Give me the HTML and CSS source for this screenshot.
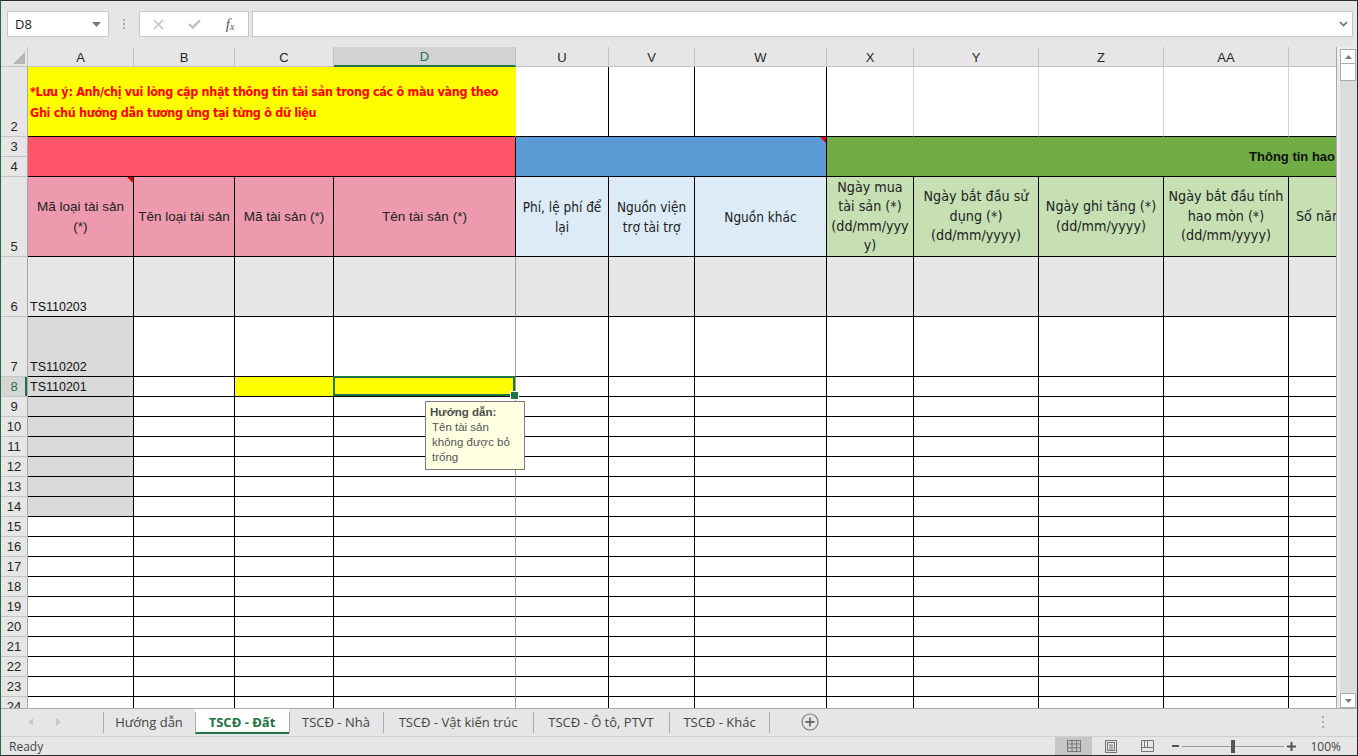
FILE: index.html
```html
<!DOCTYPE html>
<html lang="vi">
<head>
<meta charset="utf-8">
<title>TSCĐ - Đất</title>
<link rel="stylesheet" href="styles.css">
</head>
<body>
<div class="app">
  <div class="fbar">
    <div class="namebox">
      <span class="nb-text">D8</span>
      <svg class="nb-arrow" width="9" height="5" viewBox="0 0 9 5"><polygon points="0,0 9,0 4.5,5" fill="#7a7a7a"/></svg>
    </div>
    <div class="fb-dots"><i></i><i></i><i></i></div>
    <div class="fb-btns">
      <span class="fb-slot"><svg width="11" height="11" viewBox="0 0 11 11"><path d="M1 1L10 10M10 1L1 10" stroke="#bdbdbd" stroke-width="1.4" fill="none"/></svg></span>
      <span class="fb-slot"><svg width="13" height="10" viewBox="0 0 13 10"><path d="M1 5L4.8 8.6L12 1.2" stroke="#bdbdbd" stroke-width="2.2" fill="none"/></svg></span>
      <span class="fb-slot fx">f<small>x</small></span>
    </div>
    <div class="fb-input">
      <svg class="fb-chev" width="9" height="6" viewBox="0 0 9 6"><path d="M1 1L4.5 4.5L8 1" stroke="#6f6f6f" stroke-width="1.6" fill="none"/></svg>
    </div>
  </div>

  <div class="main">
    <div class="sheet">
      <div class="row hdr">
        <div class="corner"><svg width="12" height="12" viewBox="0 0 12 12"><polygon points="12,0 12,12 0,12" fill="#b5b5b5"/></svg></div>
        <div class="ch">A</div><div class="ch">B</div><div class="ch">C</div><div class="ch csel">D</div>
        <div class="ch">U</div><div class="ch">V</div><div class="ch">W</div><div class="ch">X</div>
        <div class="ch">Y</div><div class="ch">Z</div><div class="ch">AA</div><div class="ch chl"></div>
      </div>

      <div class="row h70">
        <div class="rh">2</div>
        <div class="c note s4">*Lưu ý: Anh/chị vui lòng cập nhật thông tin tài sản trong các ô màu vàng theo<br>Ghi chú hướng dẫn tương ứng tại từng ô dữ liệu</div>
        <div class="c"></div><div class="c"></div><div class="c"></div>
        <div class="c gl"></div><div class="c gl"></div><div class="c gl"></div><div class="c gl"></div><div class="c e"></div>
      </div>

      <div class="row h40">
        <div class="rh-pair"><div class="rh">3</div><div class="rh">4</div></div>
        <div class="c band-red s4"></div>
        <div class="c band-blue s3 cmt"></div>
        <div class="c band-green s5 e"><span class="band-title">Thông tin hao</span></div>
      </div>

      <div class="row h80">
        <div class="rh">5</div>
        <div class="c hd pk cmt">Mã loại tài sản<br>(*)</div>
        <div class="c hd pk">Tên loại tài sản</div>
        <div class="c hd pk">Mã tài sản (*)</div>
        <div class="c hd pk">Tên tài sản (*)</div>
        <div class="c hd lb nw">Phí, lệ phí để<br>lại</div>
        <div class="c hd lb nw">Nguồn viện<br>trợ tài trợ</div>
        <div class="c hd lb nw">Nguồn khác</div>
        <div class="c hd lg nl">Ngày mua<br>tài sản (*)<br>(dd/mm/yyy<br>y)</div>
        <div class="c hd lg nl">Ngày bắt đầu sử<br>dụng (*)<br>(dd/mm/yyyy)</div>
        <div class="c hd lg nl">Ngày ghi tăng (*)<br>(dd/mm/yyyy)</div>
        <div class="c hd lg nl">Ngày bắt đầu tính<br>hao mòn (*)<br>(dd/mm/yyyy)</div>
        <div class="c hd lg nl e clip">Số năm sử dụng</div>
      </div>

      <div class="row h60">
        <div class="rh">6</div>
        <div class="c g6 v">TS110203</div><div class="c g6"></div><div class="c g6"></div><div class="c g6 dz"></div>
        <div class="c g6"></div><div class="c g6"></div><div class="c g6"></div><div class="c g6"></div>
        <div class="c g6"></div><div class="c g6"></div><div class="c g6"></div><div class="c g6 e"></div>
      </div>

      <div class="row h60">
        <div class="rh">7</div>
        <div class="c ga v">TS110202</div><div class="c"></div><div class="c"></div><div class="c dz"></div>
        <div class="c"></div><div class="c"></div><div class="c"></div><div class="c"></div>
        <div class="c"></div><div class="c"></div><div class="c"></div><div class="c e"></div>
      </div>

      <div class="row h20">
        <div class="rh rsel">8</div>
        <div class="c ga v">TS110201</div><div class="c"></div><div class="c yl"></div><div class="c yl dz sel"></div>
        <div class="c"></div><div class="c"></div><div class="c"></div><div class="c"></div>
        <div class="c"></div><div class="c"></div><div class="c"></div><div class="c e"></div>
      </div>

      <div class="row h20"><div class="rh">9</div><div class="c ga"></div><div class="c"></div><div class="c"></div><div class="c dz"></div><div class="c"></div><div class="c"></div><div class="c"></div><div class="c"></div><div class="c"></div><div class="c"></div><div class="c"></div><div class="c e"></div></div>
      <div class="row h20"><div class="rh">10</div><div class="c ga"></div><div class="c"></div><div class="c"></div><div class="c dz"></div><div class="c"></div><div class="c"></div><div class="c"></div><div class="c"></div><div class="c"></div><div class="c"></div><div class="c"></div><div class="c e"></div></div>
      <div class="row h20"><div class="rh">11</div><div class="c ga"></div><div class="c"></div><div class="c"></div><div class="c dz"></div><div class="c"></div><div class="c"></div><div class="c"></div><div class="c"></div><div class="c"></div><div class="c"></div><div class="c"></div><div class="c e"></div></div>
      <div class="row h20"><div class="rh">12</div><div class="c ga"></div><div class="c"></div><div class="c"></div><div class="c dz"></div><div class="c"></div><div class="c"></div><div class="c"></div><div class="c"></div><div class="c"></div><div class="c"></div><div class="c"></div><div class="c e"></div></div>
      <div class="row h20"><div class="rh">13</div><div class="c ga"></div><div class="c"></div><div class="c"></div><div class="c dz"></div><div class="c"></div><div class="c"></div><div class="c"></div><div class="c"></div><div class="c"></div><div class="c"></div><div class="c"></div><div class="c e"></div></div>
      <div class="row h20"><div class="rh">14</div><div class="c ga"></div><div class="c"></div><div class="c"></div><div class="c dz"></div><div class="c"></div><div class="c"></div><div class="c"></div><div class="c"></div><div class="c"></div><div class="c"></div><div class="c"></div><div class="c e"></div></div>
      <div class="row h20"><div class="rh">15</div><div class="c"></div><div class="c"></div><div class="c"></div><div class="c dz"></div><div class="c"></div><div class="c"></div><div class="c"></div><div class="c"></div><div class="c"></div><div class="c"></div><div class="c"></div><div class="c e"></div></div>
      <div class="row h20"><div class="rh">16</div><div class="c"></div><div class="c"></div><div class="c"></div><div class="c dz"></div><div class="c"></div><div class="c"></div><div class="c"></div><div class="c"></div><div class="c"></div><div class="c"></div><div class="c"></div><div class="c e"></div></div>
      <div class="row h20"><div class="rh">17</div><div class="c"></div><div class="c"></div><div class="c"></div><div class="c dz"></div><div class="c"></div><div class="c"></div><div class="c"></div><div class="c"></div><div class="c"></div><div class="c"></div><div class="c"></div><div class="c e"></div></div>
      <div class="row h20"><div class="rh">18</div><div class="c"></div><div class="c"></div><div class="c"></div><div class="c dz"></div><div class="c"></div><div class="c"></div><div class="c"></div><div class="c"></div><div class="c"></div><div class="c"></div><div class="c"></div><div class="c e"></div></div>
      <div class="row h20"><div class="rh">19</div><div class="c"></div><div class="c"></div><div class="c"></div><div class="c dz"></div><div class="c"></div><div class="c"></div><div class="c"></div><div class="c"></div><div class="c"></div><div class="c"></div><div class="c"></div><div class="c e"></div></div>
      <div class="row h20"><div class="rh">20</div><div class="c"></div><div class="c"></div><div class="c"></div><div class="c dz"></div><div class="c"></div><div class="c"></div><div class="c"></div><div class="c"></div><div class="c"></div><div class="c"></div><div class="c"></div><div class="c e"></div></div>
      <div class="row h20"><div class="rh">21</div><div class="c"></div><div class="c"></div><div class="c"></div><div class="c dz"></div><div class="c"></div><div class="c"></div><div class="c"></div><div class="c"></div><div class="c"></div><div class="c"></div><div class="c"></div><div class="c e"></div></div>
      <div class="row h20"><div class="rh">22</div><div class="c"></div><div class="c"></div><div class="c"></div><div class="c dz"></div><div class="c"></div><div class="c"></div><div class="c"></div><div class="c"></div><div class="c"></div><div class="c"></div><div class="c"></div><div class="c e"></div></div>
      <div class="row h20"><div class="rh">23</div><div class="c"></div><div class="c"></div><div class="c"></div><div class="c dz"></div><div class="c"></div><div class="c"></div><div class="c"></div><div class="c"></div><div class="c"></div><div class="c"></div><div class="c"></div><div class="c e"></div></div>
      <div class="row h20"><div class="rh">24</div><div class="c"></div><div class="c"></div><div class="c"></div><div class="c dz"></div><div class="c"></div><div class="c"></div><div class="c"></div><div class="c"></div><div class="c"></div><div class="c"></div><div class="c"></div><div class="c e"></div></div>

      <div class="tooltip">
        <div class="tt-title">Hướng dẫn:</div>
        <div class="tt-body">Tên tài sản<br>không được bỏ<br>trống</div>
      </div>
    </div>

    <div class="vscroll">
      <div class="vtrack">
        <div class="vbtn"><svg width="7" height="4" viewBox="0 0 7 4"><polygon points="0,4 7,4 3.5,0" fill="#7a7a7a"/></svg></div>
        <div class="vthumb"></div>
        <div class="vfill"></div>
        <div class="vbtn"><svg width="7" height="4" viewBox="0 0 7 4"><polygon points="0,0 7,0 3.5,4" fill="#7a7a7a"/></svg></div>
      </div>
    </div>
  </div>

  <div class="tabbar">
    <div class="tabnav">
      <svg width="5" height="8" viewBox="0 0 5 8"><polygon points="5,0 5,8 0,4" fill="#c8c8c8"/></svg>
      <svg width="5" height="8" viewBox="0 0 5 8"><polygon points="0,0 0,8 5,4" fill="#c8c8c8"/></svg>
    </div>
    <div class="tab t92">Hướng dẫn</div>
    <div class="tab t94 active">TSCĐ - Đất</div>
    <div class="tab t94">TSCĐ - Nhà</div>
    <div class="tab t150">TSCĐ - Vật kiến trúc</div>
    <div class="tab t136">TSCĐ - Ô tô, PTVT</div>
    <div class="tab t101 tab-end">TSCĐ - Khác</div>
    <div class="addsheet"><svg width="18" height="18" viewBox="0 0 18 18"><circle cx="9" cy="9" r="8" fill="none" stroke="#7a7a7a" stroke-width="1.2"/><path d="M9 4.5V13.5M4.5 9H13.5" stroke="#6a6a6a" stroke-width="1.8"/></svg></div>
    <div class="hdots"><i></i><i></i><i></i></div>
  </div>

  <div class="status">
    <span class="ready">Ready</span>
    <div class="views">
      <div class="view on"><svg width="14" height="12" viewBox="0 0 14 12"><rect x="0.5" y="0.5" width="13" height="11" fill="none" stroke="#767676"/><path d="M5 0.5V11.5M9.5 0.5V11.5M0.5 4H13.5M0.5 7.8H13.5" stroke="#767676"/></svg></div>
      <div class="view"><svg width="12" height="13" viewBox="0 0 12 13"><rect x="0.5" y="0.5" width="11" height="12" fill="none" stroke="#767676"/><rect x="2.5" y="2.5" width="7" height="8" fill="none" stroke="#767676"/><path d="M4 5H8M4 7H8M4 9H8" stroke="#767676"/></svg></div>
      <div class="view"><svg width="13" height="12" viewBox="0 0 13 12"><path d="M0.5 0.5H12.5V11.5H0.5Z" fill="none" stroke="#767676"/><path d="M6.5 0.5V7.5H0.5M6.5 7.5H12.5" fill="none" stroke="#767676"/><path d="M3.5 0.5V7.5" stroke="#767676"/></svg></div>
    </div>
    <div class="zoom">
      <span class="zminus"></span>
      <span class="ztrack"><span class="zthumb"></span></span>
      <svg class="zplus" width="9" height="9" viewBox="0 0 9 9"><path d="M4.5 0V9M0 4.5H9" stroke="#555" stroke-width="2"/></svg>
      <span class="zpct">100%</span>
    </div>
  </div>
</div>
</body>
</html>
```

FILE: styles.css
```css
* { box-sizing: border-box; margin: 0; padding: 0; }
html, body { width: 1358px; height: 756px; overflow: hidden; background: #fff; }
body { font-family: "Liberation Sans", Arial, sans-serif; font-size: 13px; color: #222; }

.app {
  width: 1358px; height: 756px;
  border: 1px solid #2a2a2a; border-left-color: #1f6b42;
  display: flex; flex-direction: column;
  background: #e6e6e6;
}

/* formula bar */
.fbar { height: 46px; flex: none; display: flex; align-items: center; padding: 0 4px 0 6px; }
.namebox {
  width: 102px; height: 26px; background: #fff; border: 1px solid #c6c6c6;
  display: flex; align-items: center; justify-content: space-between; padding: 0 7px 0 7px;
  font-family: "Open Sans", "Noto Sans", sans-serif; font-size: 13px; color: #222;
}
.fb-dots { width: 30px; display: flex; flex-direction: column; align-items: center; gap: 2px; }
.fb-dots i, .hdots i { display: block; width: 2px; height: 2px; background: #a8a8a8; }
.fb-btns {
  width: 110px; height: 26px; background: #fff; border: 1px solid #c6c6c6;
  display: flex; align-items: center; padding-left: 1px;
}
.fb-slot { width: 36px; height: 24px; display: flex; align-items: center; justify-content: center; }
.fx { font-family: "Liberation Serif", serif; font-style: italic; font-size: 15px; color: #555; }
.fx small { font-size: 10px; position: relative; top: 2px; }
.fb-input {
  flex: 1; height: 26px; margin-left: 3px; background: #fff; border: 1px solid #c6c6c6;
  display: flex; align-items: center; justify-content: flex-end; padding-right: 4px;
}

/* main */
.main { height: 661px; flex: none; display: flex; }
.sheet {
  width: 1336px; height: 661px; flex: none; position: relative; overflow: hidden;
  background: #fff; border-right: 1px solid #a8a8a8;
}
.row {
  display: grid;
  grid-template-columns: 27px 106px 101px 99px 182px 93px 86px 132px 87px 125px 125px 125px 47px;
}
.hdr { height: 20px; }
.h20 { height: 20px; }
.h40 { height: 40px; }
.h60 { height: 60px; }
.h70 { height: 70px; }
.h80 { height: 80px; }

.corner { background: #e6e6e6; border-right: 1px solid #c4c4c4; border-bottom: 1px solid #c4c4c4; display: flex; align-items: flex-end; justify-content: flex-end; padding: 0 2px 2px 0; }
.ch {
  background: #e6e6e6; border-right: 1px solid #c4c4c4; border-bottom: 1px solid #c4c4c4;
  display: flex; align-items: center; justify-content: center; font-size: 13px; color: #262626; padding-top: 1px;
}
.ch.csel { background: #d3d3d3; color: #217346; border-bottom: 2px solid #217346; }
.ch.chl { border-right: none; }

.rh {
  background: #e6e6e6; border-right: 1px solid #a8a8a8; border-bottom: 1px solid #c4c4c4;
  display: flex; align-items: flex-end; justify-content: center; padding-bottom: 2px;
  font-size: 13px; color: #262626; line-height: 15px;
}
.rh.rsel { background: #d6d6d6; color: #217346; box-shadow: inset -2px 0 0 #217346; }
.rh-pair { display: flex; flex-direction: column; }
.rh-pair .rh { height: 20px; }

.c { border-right: 1px solid #000; border-bottom: 1px solid #000; position: relative; }
.c.gl { border-right-color: #d4d4d4; }
.c.dz { border-right-color: #a0a0a0; }
.c.e { border-right: none; }
.s3 { grid-column: span 3; }
.s4 { grid-column: span 4; }
.s5 { grid-column: span 5; }

.note {
  background: #ffff00; border-right-color: transparent;
  display: flex; align-items: center; padding: 0 0 0 2px; white-space: nowrap;
  font-family: "DejaVu Sans Condensed", "Liberation Sans", sans-serif;
  font-weight: bold; font-size: 12.5px; letter-spacing: -0.32px; line-height: 21px; color: #ff0000;
}

.band-red { background: #ff5568; }
.band-blue { background: #5b9bd5; }
.band-green { background: #70ad47; display: flex; align-items: center; justify-content: flex-end; overflow: hidden; }
.band-title { font-weight: bold; font-size: 13px; color: #111; white-space: nowrap; padding-right: 1px; }

.cmt::after {
  content: ""; position: absolute; top: 0; right: 0;
  border-top: 6px solid #e00000; border-left: 6px solid transparent;
}

.hd { display: flex; align-items: center; justify-content: center; text-align: center; line-height: 20px; }
.pk { background: #ee9aae; font-size: 13.5px; padding: 0 1px; white-space: nowrap; }
.lb { background: #ddebf7; }
.lg { background: #c6e0b4; }
.nw { font-family: "DejaVu Sans Condensed", "Liberation Sans", sans-serif; font-size: 13.5px; color: #222; white-space: nowrap; }
.nl { font-family: "DejaVu Sans Condensed", "Liberation Sans", sans-serif; font-size: 14.2px; line-height: 19.5px; color: #222; white-space: nowrap; }
.clip { justify-content: flex-start; overflow: hidden; padding-left: 7px; }

.g6 { background: #e7e6e6; }
.ga { background: #d9d9d9; }
.yl { background: #ffff00; }
.v { display: flex; align-items: flex-end; padding: 0 0 1px 2px; font-size: 12.5px; line-height: 16px; color: #111; }

.sel::before {
  content: ""; position: absolute; left: -1px; top: -1px; right: 0; bottom: 0;
  border: 2px solid #217346; z-index: 2;
}
.sel::after {
  content: ""; position: absolute; right: -4px; bottom: -4px; width: 7px; height: 7px;
  background: #217346; border: 1px solid #fff; z-index: 3;
}

.tooltip {
  position: absolute; left: 424px; top: 354px; width: 100px; height: 69px;
  background: #ffffe1; border: 1px solid #7a7a7a; padding: 3px 4px;
  font-size: 11.5px; line-height: 15px; color: #555; z-index: 5;
}
.tt-title { font-weight: bold; color: #4d4d4d; }
.tt-body { padding-left: 2px; }

/* vertical scrollbar */
.vscroll { width: 20px; flex: none; background: #ececec; padding: 2px 0 0 3px; }
.vtrack { height: 100%; background: #dcdcdc; display: flex; flex-direction: column; }
.vbtn { height: 15px; width: 16px; background: #fff; border: 1px solid #ababab; display: flex; align-items: center; justify-content: center; }
.vthumb { height: 17px; width: 16px; background: #fff; border: 1px solid #ababab; border-top: none; }
.vfill { flex: 1; }

/* sheet tabs */
.tabbar {
  height: 28px; flex: none; border-top: 1px solid #ababab;
  display: flex; align-items: flex-start;
  font-family: "Open Sans", "Noto Sans", sans-serif; font-size: 13px; color: #444;
}
.tabnav { width: 102px; height: 25px; display: flex; align-items: center; padding-left: 27px; gap: 23px; }
.tab { position: relative; height: 25px; display: flex; align-items: center; justify-content: center; white-space: nowrap; flex: none; }
.t92 { width: 92px; }
.t94 { width: 94px; }
.t150 { width: 150px; }
.t136 { width: 136px; }
.t101 { width: 101px; }
.tab::before { content: ""; position: absolute; left: 0; top: 3px; bottom: 1px; width: 1px; background: #ababab; }
.tab-end::after { content: ""; position: absolute; right: 0; top: 3px; bottom: 1px; width: 1px; background: #ababab; }
.tab.active { background: #fff; color: #217346; font-weight: bold; box-shadow: inset 0 -2px 0 #217346; }
.addsheet { height: 25px; display: flex; align-items: center; margin-left: 31px; }
.hdots { margin-left: auto; margin-right: 33px; height: 25px; display: flex; flex-direction: column; justify-content: center; gap: 3px; }

/* status bar */
.status {
  height: 19px; flex: none; border-top: 1px solid #d0d0d0; display: flex; align-items: center;
  font-family: "Open Sans", "Noto Sans", sans-serif; font-size: 12px; color: #444;
}
.ready { padding-left: 8px; }
.views { margin-left: auto; display: flex; height: 18px; }
.view { width: 37px; height: 18px; display: flex; align-items: center; justify-content: center; }
.view.on { background: #c6c6c6; }
.zoom { display: flex; align-items: center; margin-left: 6px; padding-right: 16px; }
.zminus { width: 7px; height: 2px; background: #555; }
.ztrack { position: relative; width: 102px; height: 1px; background: #9a9a9a; margin-left: 3px; }
.zthumb { position: absolute; left: 49px; top: -6px; width: 4px; height: 13px; background: #555; }
.zplus { margin-left: 3px; }
.zpct { margin-left: 14px; }
```
